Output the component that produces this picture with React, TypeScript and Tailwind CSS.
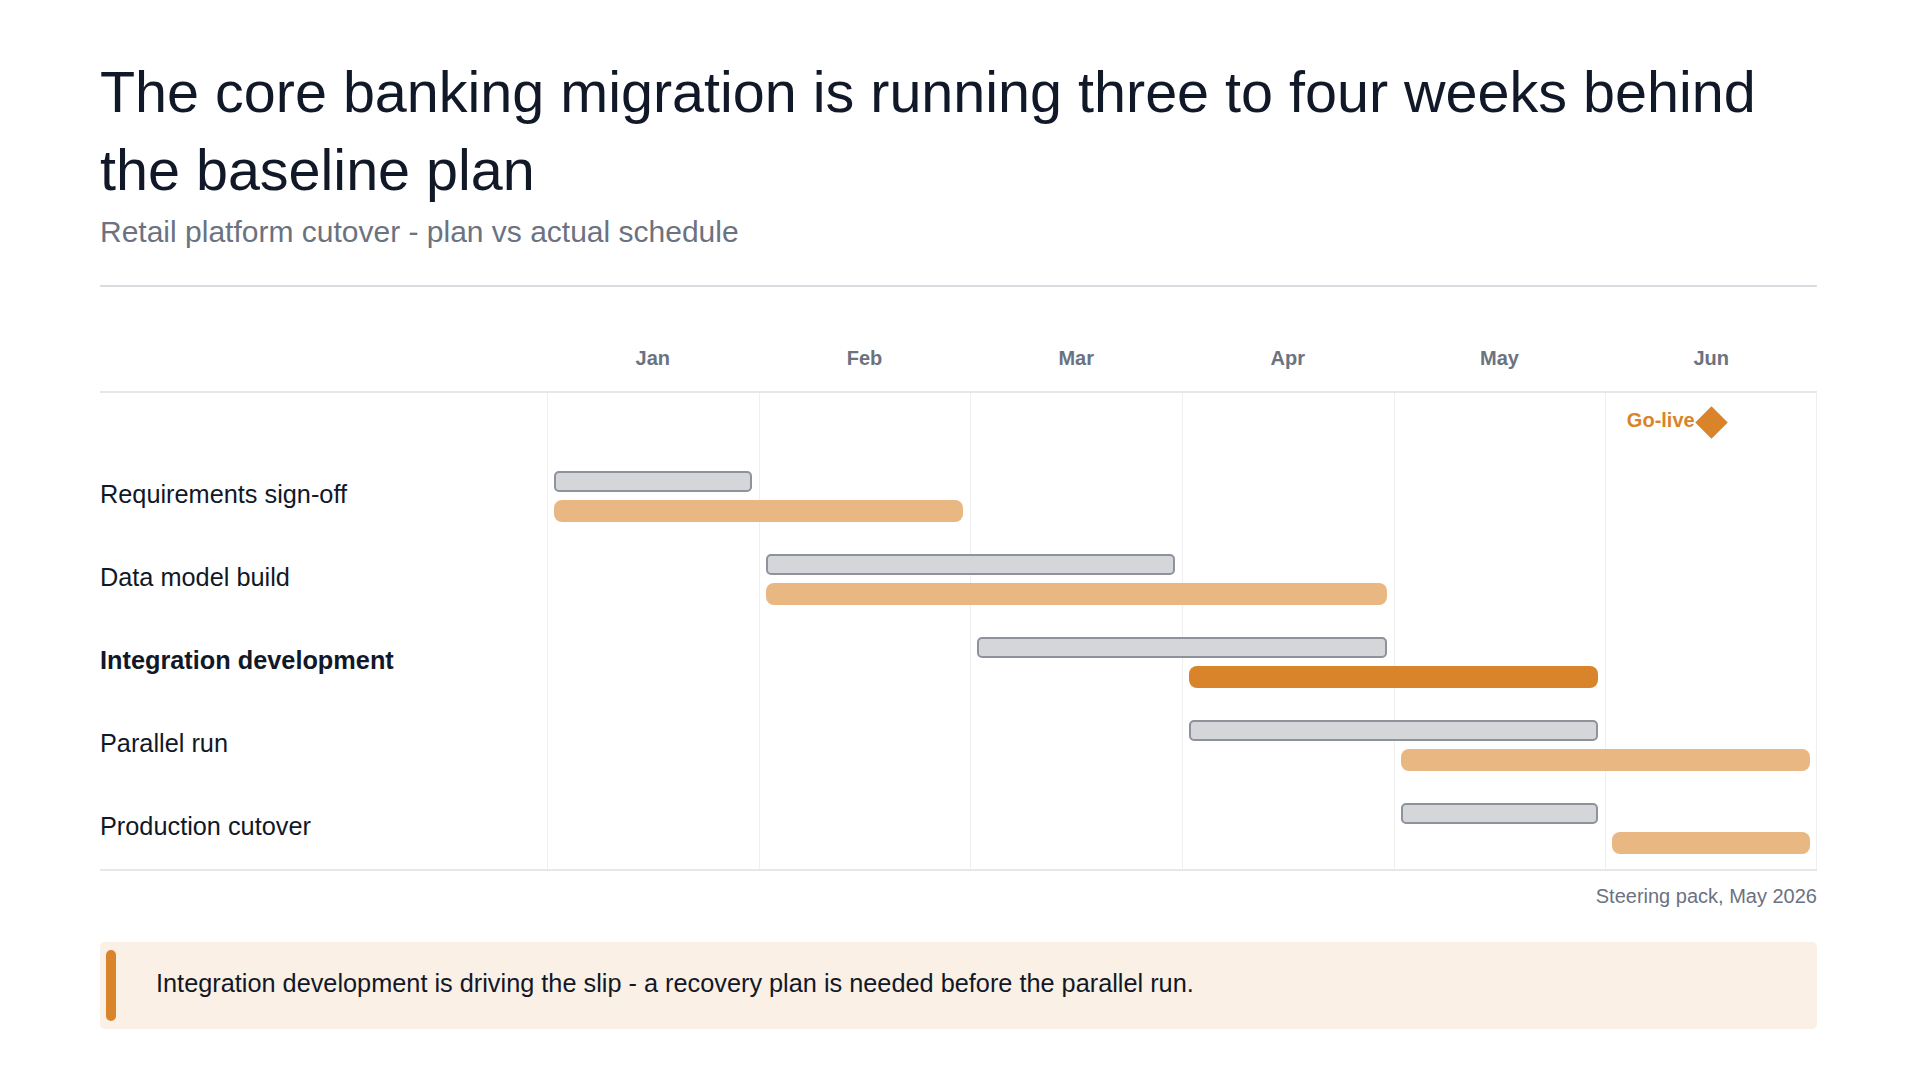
const months = ["Jan", "Feb", "Mar", "Apr", "May", "Jun"];

// full class names so Tailwind picks them up
const colStart: Record<number, string> = {
  1: "col-start-2",
  2: "col-start-3",
  3: "col-start-4",
  4: "col-start-5",
  5: "col-start-6",
  6: "col-start-7",
};

const colSpan: Record<number, string> = {
  1: "col-span-1",
  2: "col-span-2",
  3: "col-span-3",
};

const rowStart: Record<number, string> = {
  2: "row-start-2",
  3: "row-start-3",
  4: "row-start-4",
  5: "row-start-5",
  6: "row-start-6",
};

interface Task {
  label: string;
  plan: [number, number];
  actual: [number, number];
  critical?: boolean;
}

const tasks: Task[] = [
  { label: "Requirements sign-off", plan: [1, 1], actual: [1, 2] },
  { label: "Data model build", plan: [2, 2], actual: [2, 3] },
  { label: "Integration development", plan: [3, 2], actual: [4, 2], critical: true },
  { label: "Parallel run", plan: [4, 2], actual: [5, 2] },
  { label: "Production cutover", plan: [5, 1], actual: [6, 1] },
];

export default function App() {
  return (
    <div
      className="min-h-screen bg-white px-[100px] pt-[53px] text-[#111827]"
      style={{ fontFamily: '"Liberation Sans", Arial, sans-serif' }}
    >
      <h1 className="text-[57.5px] leading-[78px] font-normal">
        The core banking migration is running three to four weeks behind the baseline plan
      </h1>
      <p className="mt-[5px] text-[30px] leading-[36px] text-[#6b7280]">
        Retail platform cutover - plan vs actual schedule
      </p>

      <div className="mt-[35px] mr-[2px] h-[2px] bg-[#d9dce1]" />

      {/* month header */}
      <div className="mr-[2px] grid h-[106px] grid-cols-[447px_repeat(6,1fr)] items-end border-b-2 border-[#e5e7eb] pb-[21px]">
        <div />
        {months.map((m) => (
          <div key={m} className="text-center text-[20px] leading-[24px] font-bold text-[#6b7280]">
            {m}
          </div>
        ))}
      </div>

      {/* chart body */}
      <div className="mr-[2px] grid grid-cols-[447px_repeat(6,1fr)] grid-rows-[61px_repeat(5,83px)] border-b-2 border-[#e5e7eb]">
        {months.map((m, i) => (
          <div
            key={m}
            className={`${colStart[i + 1]} row-start-1 row-span-6 border-l border-[#efeff1] ${
              i === 5 ? "border-r" : ""
            }`}
          />
        ))}

        <div className="col-start-7 row-start-1 grid grid-cols-[1fr_auto_1fr] items-center pb-[8px]">
          <span className="text-right text-[20px] leading-[24px] font-bold text-[#d9842a]">Go-live</span>
          <div className="mx-[5px] mt-[5px] h-[23px] w-[23px] rotate-45 bg-[#d9842a]" />
          <div />
        </div>

        {tasks.map((t, i) => (
          <div
            key={t.label}
            className={`col-start-1 ${rowStart[i + 2]} flex items-center pb-[3px] text-[25.3px] leading-[29px] ${
              t.critical ? "font-bold" : ""
            }`}
          >
            {t.label}
          </div>
        ))}

        {tasks.map((t, i) => (
          <div
            key={t.label + "-plan"}
            className={`${colStart[t.plan[0]]} ${colSpan[t.plan[1]]} ${rowStart[i + 2]} mx-[7px] mt-[17px] h-[21px] self-start rounded-[5px] border-2 border-[#8e929b] bg-[#d5d6da]`}
          />
        ))}

        {tasks.map((t, i) => (
          <div
            key={t.label + "-actual"}
            className={`${colStart[t.actual[0]]} ${colSpan[t.actual[1]]} ${rowStart[i + 2]} mx-[7px] mb-[15px] h-[22px] self-end rounded-[8px] ${
              t.critical ? "bg-[#d9842a]" : "bg-[#e8b782]"
            }`}
          />
        ))}
      </div>

      <p className="mt-[13px] mr-[2px] text-right text-[20px] leading-[24px] text-[#6b7280]">
        Steering pack, May 2026
      </p>

      <div className="mt-[34px] mr-[2px] flex h-[87px] rounded-[5px] bg-[#faf0e5] py-[8px] pl-[6px]">
        <div className="w-[10px] rounded-full bg-[#d9842a]" />
        <p className="ml-[40px] flex items-center pb-[5px] text-[25.3px] leading-[30px]">
          Integration development is driving the slip - a recovery plan is needed before the parallel run.
        </p>
      </div>
    </div>
  );
}
